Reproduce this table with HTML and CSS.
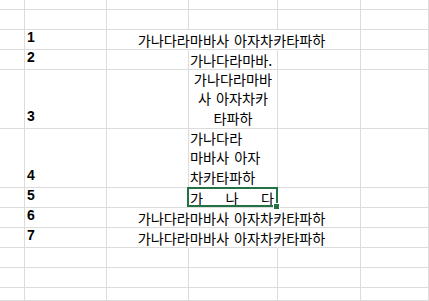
FILE: index.html
```html
<!DOCTYPE html>
<html lang="ko">
<head>
<meta charset="utf-8">
<link rel="stylesheet" href="styles.css">
</head>
<body>
<div class="sheet">
  <!-- row 0 -->
  <div class="c"></div><div class="c"></div><div class="c"></div><div class="c"></div><div class="c"></div><div class="c"></div>
  <!-- row blank -->
  <div class="c"></div><div class="c"></div><div class="c"></div><div class="c"></div><div class="c"></div><div class="c"></div>
  <!-- row 1 -->
  <div class="c"></div><div class="c num">1</div><div class="c nob"></div><div class="c nob center"><span class="over">가나다라마바사 아자차카타파하</span></div><div class="c"></div><div class="c"></div>
  <!-- row 2 -->
  <div class="c"></div><div class="c num">2</div><div class="c"></div><div class="c left clip"><span>가나다라마바.</span></div><div class="c"></div><div class="c"></div>
  <!-- row 3 -->
  <div class="c"></div><div class="c num">3</div><div class="c"></div><div class="c wrap center"><span class="ln">가나다라마바</span><span class="ln">사 아자차카</span><span class="ln">타파하</span></div><div class="c"></div><div class="c"></div>
  <!-- row 4 -->
  <div class="c"></div><div class="c num">4</div><div class="c"></div><div class="c wrap left"><span class="ln">가나다라</span><span class="ln">마바사 아자</span><span class="ln">차카타파하</span></div><div class="c"></div><div class="c"></div>
  <!-- row 5 -->
  <div class="c"></div><div class="c num">5</div><div class="c"></div><div class="c dist sel"><span>가</span><span>나</span><span>다</span></div><div class="c"></div><div class="c"></div>
  <!-- row 6 -->
  <div class="c"></div><div class="c num">6</div><div class="c nob"></div><div class="c nob center"><span class="over">가나다라마바사 아자차카타파하</span></div><div class="c"></div><div class="c"></div>
  <!-- row 7 -->
  <div class="c"></div><div class="c num">7</div><div class="c nob"></div><div class="c nob center"><span class="over">가나다라마바사 아자차카타파하</span></div><div class="c"></div><div class="c"></div>
  <!-- blank rows -->
  <div class="c"></div><div class="c"></div><div class="c"></div><div class="c"></div><div class="c"></div><div class="c"></div>
  <div class="c"></div><div class="c"></div><div class="c"></div><div class="c"></div><div class="c"></div><div class="c"></div>
  <div class="c"></div><div class="c"></div><div class="c"></div><div class="c"></div><div class="c"></div><div class="c"></div>
</div>
</body>
</html>
```

FILE: styles.css
```css
html, body {
  margin: 0;
  padding: 0;
  background: #ffffff;
}

.sheet {
  display: grid;
  grid-template-columns: 25px 82px 82px 89px 83px 1fr;
  grid-template-rows: 10px 20px 20px 20px 59px 59px 20px 20px 20px 20px 20px 1fr;
  width: 429px;
  height: 301px;
  overflow: hidden;
  font-family: "Noto Sans CJK KR", "Noto Sans", sans-serif;
  font-size: 14.2px;
  color: #000;
}

.c {
  box-sizing: border-box;
  border-right: 1px solid #dcdcdc;
  border-bottom: 1px solid #dcdcdc;
  display: flex;
  align-items: center;
  min-width: 0;
  line-height: 20px;
}

.nob {
  border-right-color: transparent;
}

.num {
  font-family: "Liberation Sans", Arial, sans-serif;
  font-weight: bold;
  font-size: 14px;
  align-items: flex-end;
  padding-left: 2px;
  padding-bottom: 2px;
}

.center {
  justify-content: center;
}

.left {
  justify-content: flex-start;
  padding-left: 1px;
}

.over {
  white-space: nowrap;
  flex: none;
  word-spacing: 1px;
  position: relative;
  z-index: 1;
  margin-right: 3px;
}

.clip {
  overflow: hidden;
  white-space: nowrap;
}

.wrap {
  flex-direction: column;
  justify-content: flex-end;
  align-items: stretch;
  white-space: nowrap;
  word-spacing: 1px;
}

.ln {
  display: block;
  height: 19.3px;
  line-height: 19.3px;
  overflow: visible;
}

.wrap.center {
  text-align: center;
}

.wrap.left {
  text-align: left;
  padding-left: 1px;
}

.dist {
  justify-content: space-between;
  padding: 0 3px 0 1px;
}

.sel {
  position: relative;
}

.sel::before {
  content: "";
  position: absolute;
  left: -2px;
  top: -1px;
  right: -1px;
  bottom: 0;
  border: 2px solid #217346;
  z-index: 2;
}

.sel::after {
  content: "";
  position: absolute;
  right: -3px;
  bottom: -3px;
  width: 5px;
  height: 5px;
  background: #217346;
  border: 1px solid #ffffff;
  z-index: 3;
}
```
